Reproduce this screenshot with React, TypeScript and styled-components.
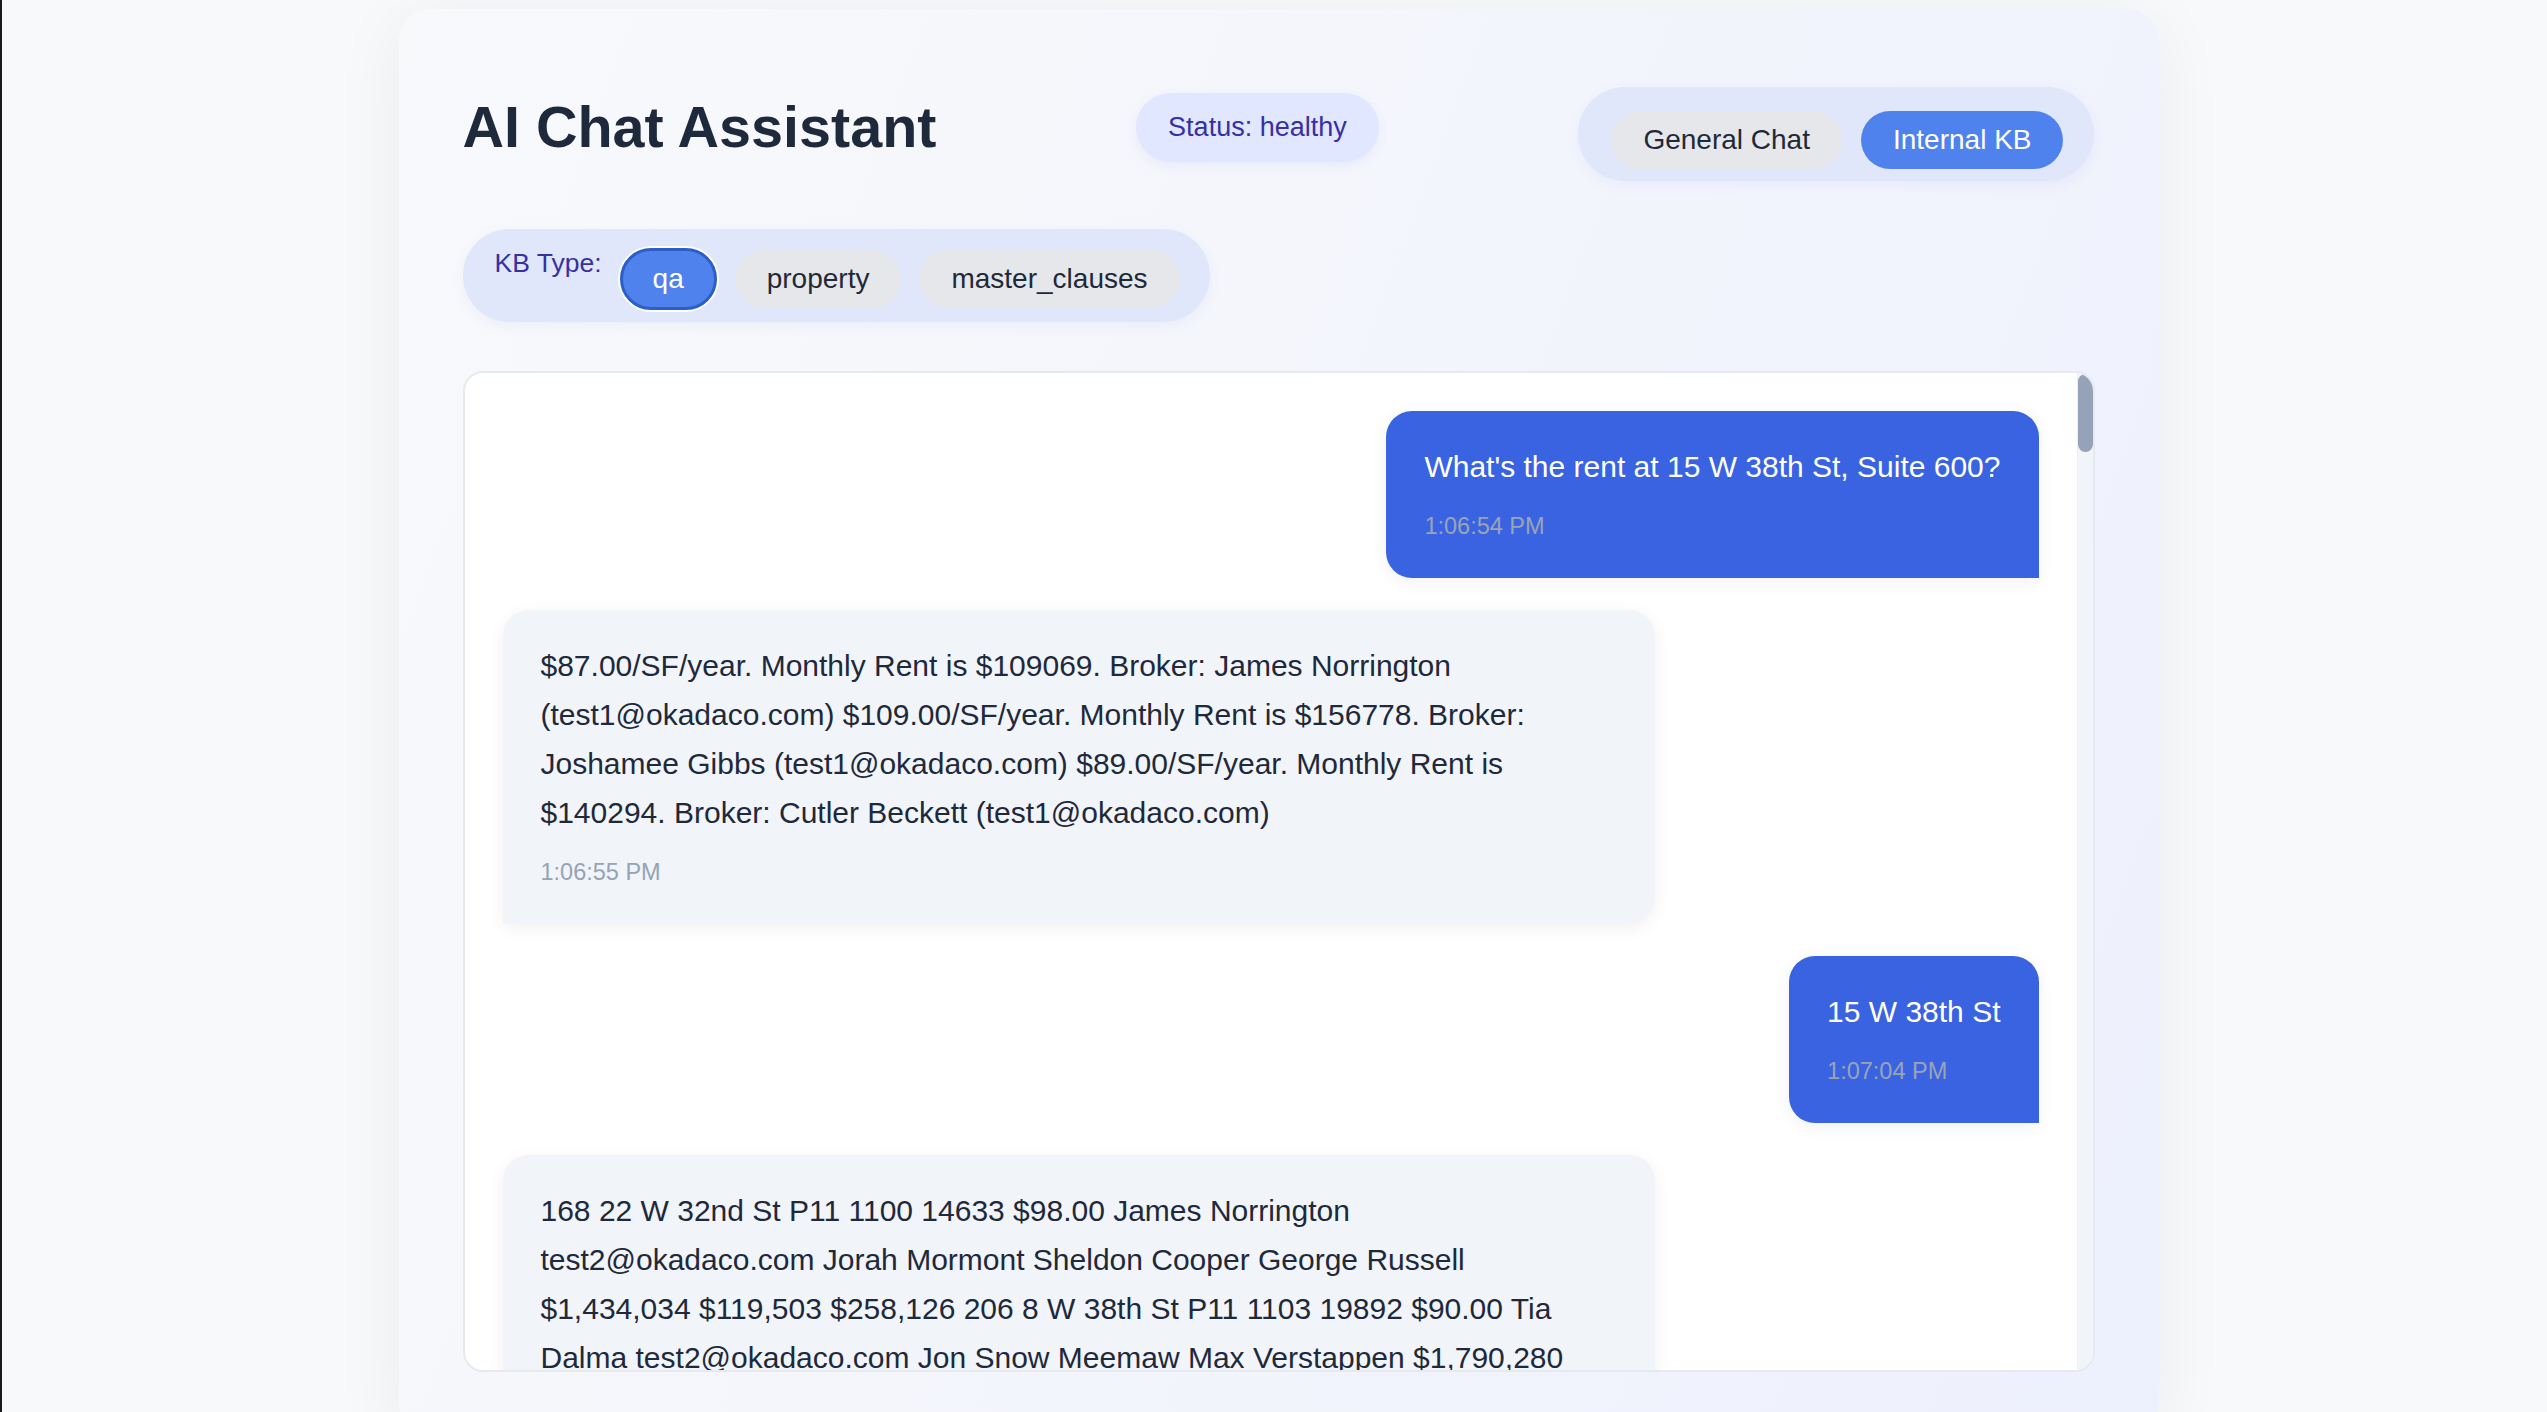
import React from 'react';
import styled, { createGlobalStyle } from 'styled-components';

const GlobalStyle = createGlobalStyle`
  html, body {
    margin: 0;
    padding: 0;
    background: #f8f9fb;
    overflow: hidden;
  }
  body {
    font-family: "Liberation Sans", Helvetica, Arial, sans-serif;
  }
  *, *::before, *::after {
    box-sizing: border-box;
  }
`;

const Page = styled.div`
  min-height: 100vh;
  border-left: 2px solid #1b1b1b;
  padding: 9px 0 0 8px;
  display: flex;
  justify-content: center;
  align-items: flex-start;
`;

const Card = styled.main`
  width: 1760px;
  padding: 64px;
  border-radius: 32px;
  background: linear-gradient(110deg, #f8f9fb 0%, #f4f6fc 45%, #edf0fd 100%);
  box-shadow: 0 10px 70px rgba(15, 23, 42, 0.06);
  display: flex;
  flex-direction: column;
`;

const Header = styled.header`
  display: flex;
  justify-content: space-between;
  align-items: center;
  margin-bottom: 48px;
`;

const Title = styled.h1`
  margin: 0;
  font-size: 57.5px;
  font-weight: 700;
  color: #1e293b;
  line-height: normal;
`;

const StatusPill = styled.div`
  height: 69px;
  padding: 0 32px;
  display: inline-flex;
  align-items: center;
  border-radius: 999px;
  background: #e0e7ff;
  color: #3730a3;
  font-size: 27px;
  box-shadow: 0 4px 12px rgba(79, 70, 229, 0.07);
`;

const ModeToggle = styled.div`
  margin-top: 14px;
  display: flex;
  gap: 19px;
  padding: 24px 31px 12px 33px;
  border-radius: 999px;
  background: #e0e7fb;
  box-shadow: 0 4px 14px rgba(79, 70, 229, 0.06);
`;

const PillButton = styled.button<{ $active?: boolean; $focused?: boolean }>`
  height: ${(p) => (p.$focused ? '62px' : '58px')};
  padding: 0 ${(p) => (p.$focused ? '30px' : '32px')};
  border-radius: 999px;
  border: ${(p) => (p.$focused ? '3px solid #2c5ec9' : 'none')};
  box-shadow: ${(p) => (p.$focused ? '0 0 0 2px #ffffff' : 'none')};
  background: ${(p) => (p.$active ? '#5082ee' : '#e5e7eb')};
  color: ${(p) => (p.$active ? '#ffffff' : '#1f2937')};
  font-family: inherit;
  font-size: 28px;
  line-height: 1;
  cursor: pointer;
  white-space: nowrap;
`;

const KBRow = styled.div`
  align-self: flex-start;
  display: flex;
  align-items: center;
  gap: 18px;
  padding: 19px 30px 12px 32px;
  border-radius: 999px;
  background: #e0e7fb;
  box-shadow: 0 4px 14px rgba(79, 70, 229, 0.06);
  margin-bottom: 49px;
`;

const KBLabel = styled.span`
  align-self: flex-start;
  font-size: 26.5px;
  color: #3730a3;
  line-height: normal;
`;

const ChatFrame = styled.section`
  height: 1001px;
  border: 2px solid #e6e9ef;
  border-radius: 20px;
  background: #ffffff;
  overflow: hidden;
  display: flex;
`;

const MessageList = styled.div`
  flex: 1;
  min-width: 0;
  overflow: hidden;
  padding: 38px;
  display: flex;
  flex-direction: column;
  gap: 32px;
`;

const ScrollTrack = styled.div`
  width: 16px;
  flex-shrink: 0;
  background: #f1f4f9;
  border-left: 1px solid #eceff4;
  padding-top: 1px;
`;

const ScrollThumb = styled.div`
  height: 78px;
  border-radius: 8px;
  background: #94a3b8;
`;

const Bubble = styled.div<{ $user?: boolean }>`
  flex-shrink: 0;
  max-width: 75%;
  align-self: ${(p) => (p.$user ? 'flex-end' : 'flex-start')};
  padding: 31px 38px 32px;
  border-radius: ${(p) => (p.$user ? '26px 26px 0 26px' : '26px 26px 26px 0')};
  background: ${(p) => (p.$user ? '#3a63e1' : '#f1f4f9')};
  color: ${(p) => (p.$user ? '#ffffff' : '#1e293b')};
  font-size: 30px;
  line-height: 49px;
  box-shadow: 0 4px 18px rgba(15, 23, 42, 0.06);
`;

const Timestamp = styled.div<{ $user?: boolean }>`
  margin-top: 16px;
  font-size: 23.5px;
  line-height: 39px;
  color: ${(p) => (p.$user ? '#9aa3b6' : '#94a3b8')};
`;

type Message = { id: number; user: boolean; text: string; time: string };

const streets = ['15 W 38th St', '35 W 36th St', '120 W 45th St', '248 W 35th St', '10 E 39th St', '307 5th Ave'];
const brokers = ['James Norrington', 'Tia Dalma', 'Joshamee Gibbs', 'Cutler Beckett', 'Hector Barbossa'];
const people = [
  'Jorah Mormont',
  'Sheldon Cooper',
  'George Russell',
  'Jon Snow',
  'Meemaw',
  'Max Verstappen',
  'Arya Stark',
  'Leonard Hofstadter',
  'Lando Norris',
];

const money = (n: number) => '$' + n.toLocaleString('en-US');

function buildListing(): string {
  const rows: string[] = [
    '168 22 W 32nd St P11 1100 14633 $98.00 James Norrington test2@okadaco.com Jorah Mormont Sheldon Cooper George Russell $1,434,034 $119,503 $258,126',
    '206 8 W 38th St P11 1103 19892 $90.00 Tia Dalma test2@okadaco.com Jon Snow Meemaw Max Verstappen $1,790,280 $149,190 $322,250',
  ];
  let seed = 17;
  const rnd = (m: number) => {
    seed = (seed * 1103515245 + 12345) % 2147483648;
    return seed % m;
  };
  for (let i = 0; i < 8; i++) {
    const id = 210 + i * 3 + rnd(3);
    const street = streets[rnd(streets.length)];
    const floor = 'P' + (2 + rnd(20));
    const suite = 1100 + rnd(900);
    const sf = 4000 + rnd(20000);
    const rate = 70 + rnd(40);
    const broker = brokers[rnd(brokers.length)];
    const a = people[rnd(people.length)];
    const b = people[rnd(people.length)];
    const c = people[rnd(people.length)];
    const annual = sf * rate;
    rows.push(
      `${id} ${street} ${floor} ${suite} ${sf} $${rate}.00 ${broker} test2@okadaco.com ${a} ${b} ${c} ${money(annual)} ${money(Math.round(annual / 12))} ${money(Math.round(annual * 0.18))}`
    );
  }
  return rows.join(' ');
}

const messages: Message[] = [
  { id: 1, user: true, text: "What's the rent at 15 W 38th St, Suite 600?", time: '1:06:54 PM' },
  {
    id: 2,
    user: false,
    text:
      '$87.00/SF/year. Monthly Rent is $109069. Broker: James Norrington (test1@okadaco.com) $109.00/SF/year. Monthly Rent is $156778. Broker: Joshamee Gibbs (test1@okadaco.com) $89.00/SF/year. Monthly Rent is $140294. Broker: Cutler Beckett (test1@okadaco.com)',
    time: '1:06:55 PM',
  },
  { id: 3, user: true, text: '15 W 38th St', time: '1:07:04 PM' },
  { id: 4, user: false, text: buildListing(), time: '1:07:06 PM' },
];

export default function App() {
  return (
    <>
      <GlobalStyle />
      <Page>
        <Card>
          <Header>
            <Title>AI Chat Assistant</Title>
            <StatusPill>Status: healthy</StatusPill>
            <ModeToggle>
              <PillButton>General Chat</PillButton>
              <PillButton $active>Internal KB</PillButton>
            </ModeToggle>
          </Header>
          <KBRow>
            <KBLabel>KB Type:</KBLabel>
            <PillButton $active $focused>
              qa
            </PillButton>
            <PillButton>property</PillButton>
            <PillButton>master_clauses</PillButton>
          </KBRow>
          <ChatFrame>
            <MessageList>
              {messages.map((m) => (
                <Bubble key={m.id} $user={m.user}>
                  <div>{m.text}</div>
                  <Timestamp $user={m.user}>{m.time}</Timestamp>
                </Bubble>
              ))}
            </MessageList>
            <ScrollTrack>
              <ScrollThumb />
            </ScrollTrack>
          </ChatFrame>
        </Card>
      </Page>
    </>
  );
}
